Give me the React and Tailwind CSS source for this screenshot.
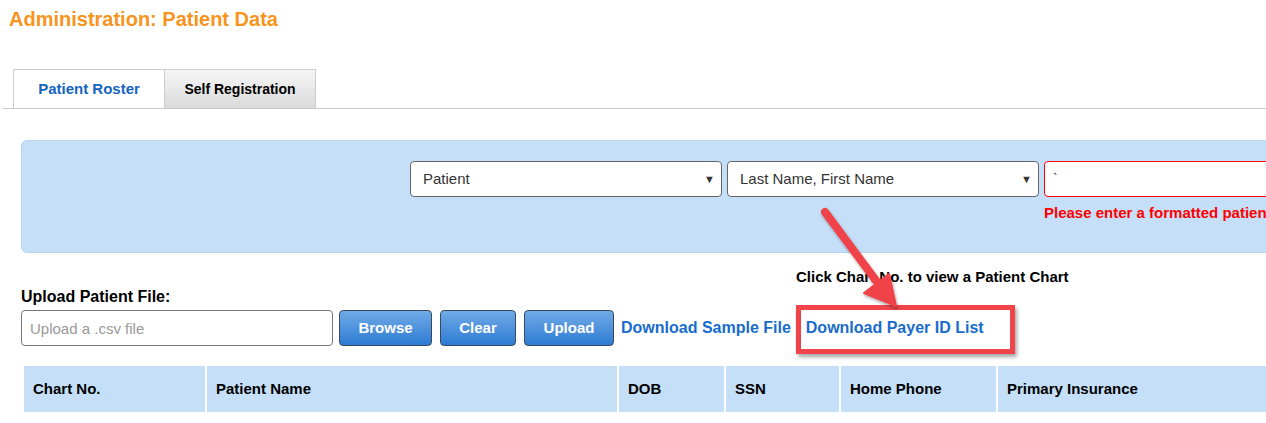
import React from "react";

const columns = [
  { label: "Chart No.", width: "w-[181px]" },
  { label: "Patient Name", width: "w-[410px]" },
  { label: "DOB", width: "w-[105px]" },
  { label: "SSN", width: "w-[113px]" },
  { label: "Home Phone", width: "w-[155px]" },
  { label: "Primary Insurance", width: "w-[300px]" },
];

const Arrow = () => (
  <svg
    className="absolute left-0 top-0 pointer-events-none"
    width="1266"
    height="423"
    viewBox="0 0 1266 423"
  >
    <defs>
      <filter id="arrowShadow" x="-20%" y="-20%" width="140%" height="140%">
        <feDropShadow dx="1" dy="2" stdDeviation="1.5" floodColor="#000" floodOpacity="0.35" />
      </filter>
    </defs>
    <g filter="url(#arrowShadow)" fill="#f0434a" stroke="#f0434a">
      <line x1="825" y1="212" x2="880" y2="286" strokeWidth="8" strokeLinecap="round" />
      <polygon points="896,306 864,293 889,274" strokeWidth="2" strokeLinejoin="round" />
    </g>
  </svg>
);

const BlueButton = ({ children, width }) => (
  <button
    className={`${width} h-[36px] rounded-[4px] border border-[#3a4a5c] bg-gradient-to-b from-[#70aae6] to-[#2b7bd3] text-white text-[15px] font-bold`}
  >
    {children}
  </button>
);

export default function App() {
  return (
    <div className="relative w-[1266px] h-[423px] overflow-hidden bg-white font-['Liberation_Sans',Arial,sans-serif] text-black">
      {/* Title */}
      <h1 className="mt-[7px] ml-[9px] text-[20px] leading-[24px] font-bold text-[#f7941d]">
        Administration: Patient Data
      </h1>

      {/* Tabs */}
      <div className="mt-[38px] ml-[2px] flex pl-[11px] border-b border-[#cccccc]">
        <div className="w-[152px] h-[39px] flex items-center justify-center bg-white border border-b-0 border-[#cccccc] text-[15px] font-bold text-[#1565c0]">
          Patient Roster
        </div>
        <div className="w-[151px] h-[39px] flex items-center justify-center bg-gradient-to-b from-[#f6f6f6] to-[#dadada] border border-l-0 border-b-0 border-[#cccccc] text-[14px] font-bold text-black">
          Self Registration
        </div>
      </div>

      {/* Search panel */}
      <div className="mt-[31px] ml-[21px] w-[1400px] h-[113px] rounded-[6px] bg-[#c4dff7] border border-[#b9d6f0] pl-[388px] pt-[20px] flex gap-[5px]">
        <div className="w-[312px] h-[36px] bg-white border border-[#666] rounded-[4px] flex items-center justify-between pl-[12px] pr-[6px] text-[15px] text-[#333]">
          <span>Patient</span>
          <span className="text-[11px] text-[#333]">▼</span>
        </div>
        <div className="w-[312px] h-[36px] bg-white border border-[#666] rounded-[4px] flex items-center justify-between pl-[12px] pr-[6px] text-[15px] text-[#333]">
          <span>Last Name, First Name</span>
          <span className="text-[11px] text-[#333]">▼</span>
        </div>
        <div className="flex flex-col">
          <div className="w-[312px] h-[36px] bg-white border border-[#ff0000] rounded-[4px] flex items-center pl-[8px] text-[14px] text-[#333]">
            `
          </div>
          <div className="mt-[8px] text-[15px] font-bold text-[#ff0000] leading-[16px] whitespace-nowrap">
            Please enter a formatted patient name
          </div>
        </div>
      </div>

      {/* Upload area */}
      <div className="mt-[14px] ml-[21px]">
        <div className="pl-[775px] text-[15px] leading-[20px] font-bold">
          Click Chart No. to view a Patient Chart
        </div>
        <div className="text-[16px] leading-[20px] font-bold">Upload Patient File:</div>
        <div className="mt-[3px] flex items-center">
          <input
            className="w-[312px] h-[36px] border border-[#777] rounded-[4px] pl-[8px] text-[15px] placeholder-[#999] outline-none"
            placeholder="Upload a .csv file"
            readOnly
          />
          <div className="ml-[6px] flex gap-[8px]">
            <BlueButton width="w-[93px]">Browse</BlueButton>
            <BlueButton width="w-[76px]">Clear</BlueButton>
            <BlueButton width="w-[90px]">Upload</BlueButton>
          </div>
          <a className="ml-[7px] text-[16px] font-bold text-[#176ccc] whitespace-nowrap">
            Download Sample File
          </a>
          <a className="ml-[15px] text-[16px] font-bold text-[#176ccc] whitespace-nowrap">
            Download Payer ID List
          </a>
        </div>

        {/* Table header */}
        <div className="mt-[20px] ml-[3px] flex gap-[2px]">
          {columns.map((col) => (
            <div
              key={col.label}
              className={`${col.width} shrink-0 h-[46px] bg-[#c4dff7] flex items-center pl-[9px] text-[15px] font-bold`}
            >
              {col.label}
            </div>
          ))}
        </div>
      </div>

      {/* Annotation */}
      <div className="absolute left-[796px] top-[305px] w-[219px] h-[49px] border-[5px] border-[#f0434a] shadow-[2px_3px_4px_rgba(0,0,0,0.35)]" />
      <Arrow />
    </div>
  );
}
